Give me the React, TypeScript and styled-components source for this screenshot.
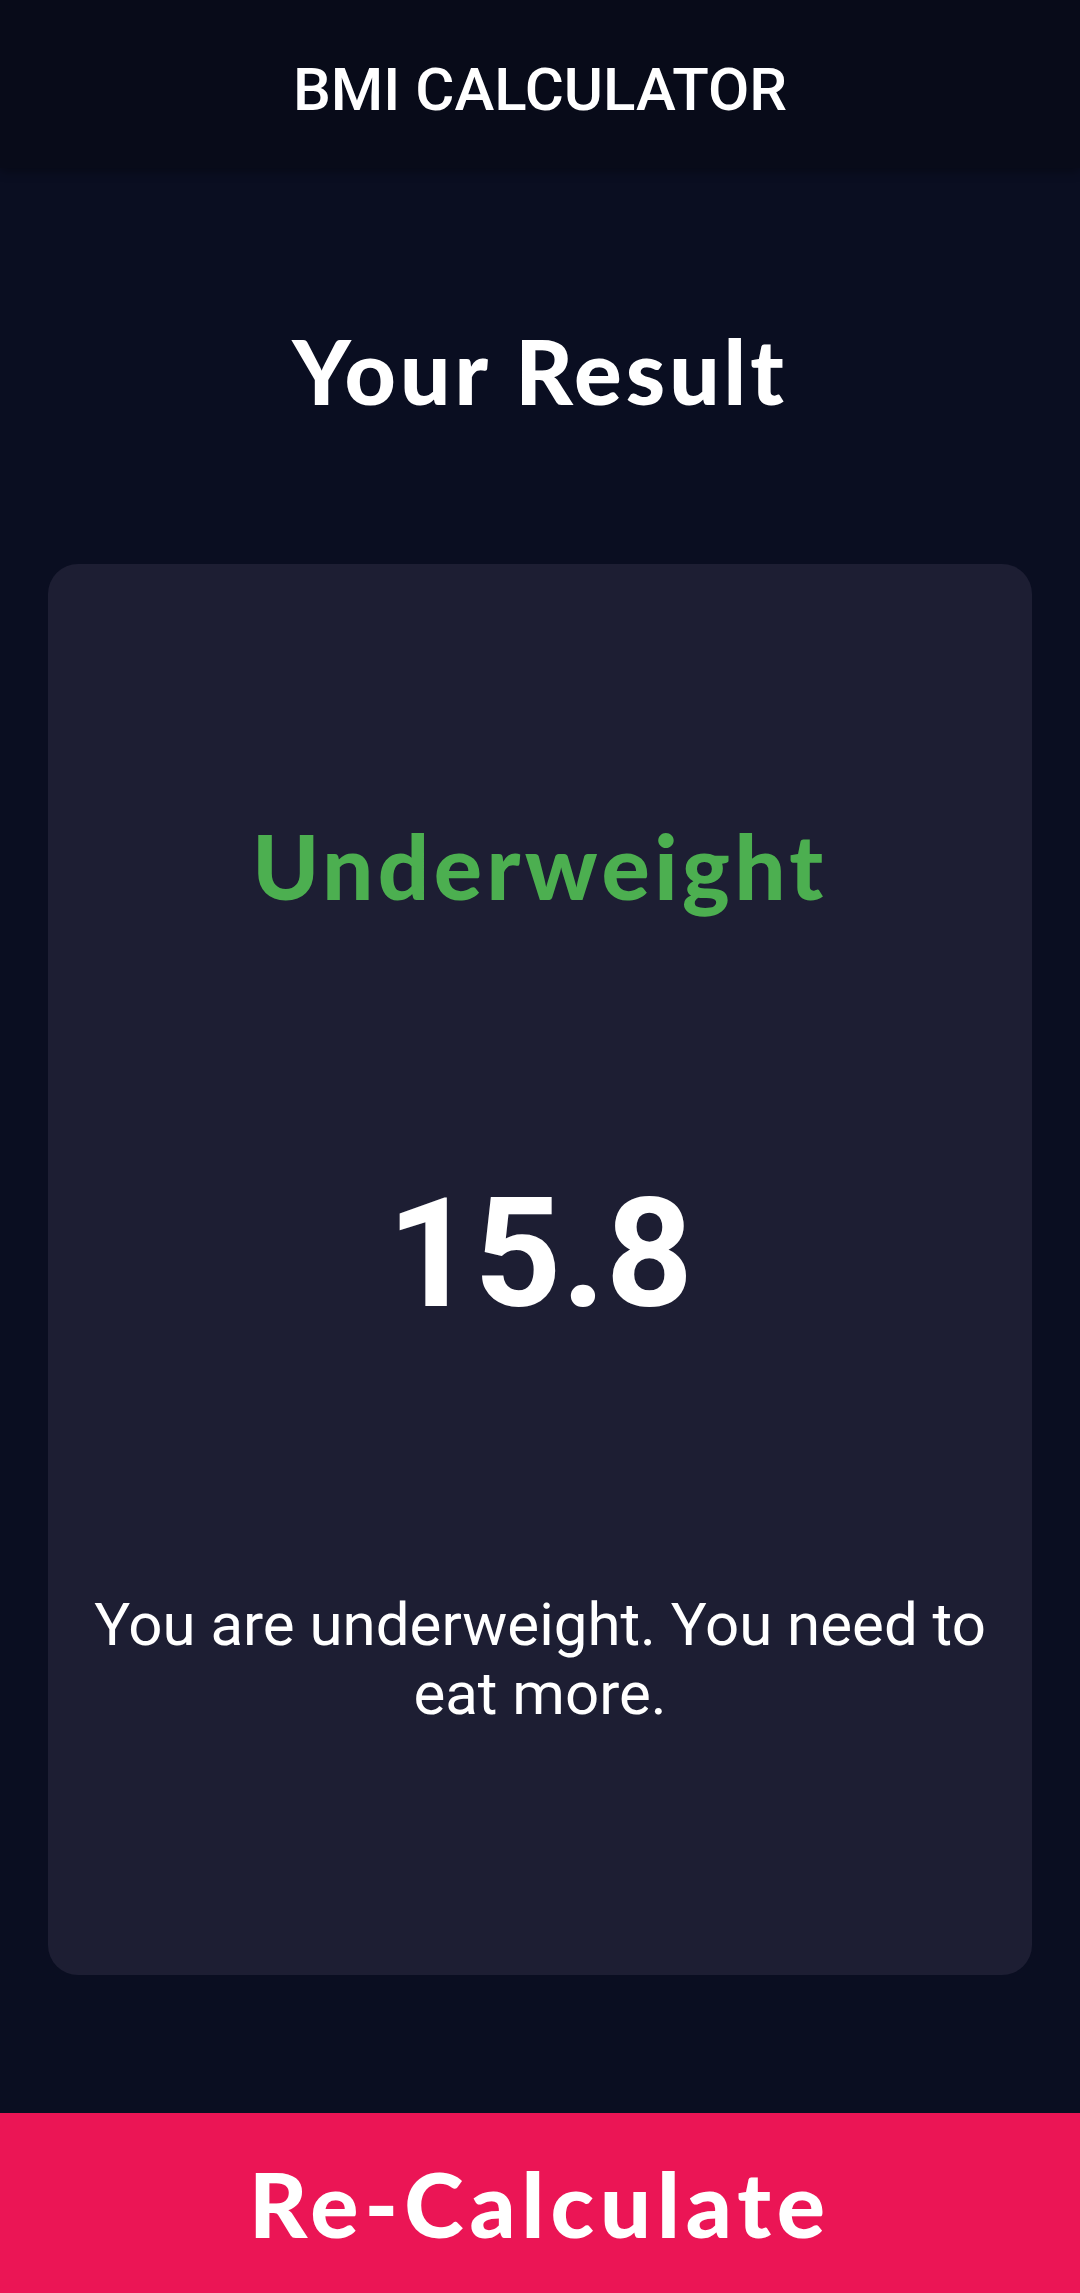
import styled, { createGlobalStyle } from 'styled-components';

const GlobalStyle = createGlobalStyle`
  html, body {
    margin: 0;
    padding: 0;
    background-color: #0A0E21;
  }
  * {
    box-sizing: border-box;
  }
`;

const Screen = styled.div`
  display: flex;
  flex-direction: column;
  height: 100vh;
  background-color: #0A0E21;
  color: white;
`;

const AppBar = styled.header`
  flex: 0 0 168px;
  display: flex;
  align-items: center;
  justify-content: center;
  background-color: #080B19;
  box-shadow: 0 3px 10px rgba(0, 0, 0, 0.35);
  position: relative;
  z-index: 1;
`;

const AppTitle = styled.h1`
  margin: 0;
  padding-top: 10px;
  font-family: Roboto, "Liberation Sans", sans-serif;
  font-size: 60px;
  font-weight: 500;
  color: #ffffff;
`;

const Content = styled.main`
  flex: 1;
  display: flex;
  flex-direction: column;
  padding: 0 48px;
`;

const Title = styled.h2`
  margin: 150px 0 139px;
  text-align: center;
  font-family: Lato, "Open Sans", sans-serif;
  font-size: 89px;
  line-height: 1.2;
  font-weight: 900;
  letter-spacing: 4px;
  color: #ffffff;
`;

const Card = styled.section`
  height: 1411px;
  display: flex;
  flex-direction: column;
  justify-content: space-evenly;
  align-items: center;
  padding: 0 16px;
  background-color: #1D1E33;
  border-radius: 30px;
`;

const Status = styled.div<{ $color: string }>`
  font-family: Lato, "Open Sans", sans-serif;
  font-size: 90px;
  line-height: 1.2;
  font-weight: 900;
  letter-spacing: 4.5px;
  color: ${(p) => p.$color};
`;

const Score = styled.div`
  font-family: Roboto, "Liberation Sans", sans-serif;
  font-size: 152px;
  line-height: 1.172;
  font-weight: 700;
  color: #ffffff;
`;

const Advice = styled.p`
  margin: 0;
  text-align: center;
  font-family: Roboto, "Liberation Sans", sans-serif;
  font-size: 60px;
  line-height: 69px;
  font-weight: 400;
  color: #ffffff;
`;

const BottomButton = styled.button`
  flex: 0 0 180px;
  width: 100%;
  border: none;
  margin: 0;
  padding: 0;
  display: flex;
  align-items: center;
  justify-content: center;
  background-color: #EB1555;
  color: #ffffff;
  font-family: Lato, "Open Sans", sans-serif;
  font-size: 90px;
  font-weight: 900;
  letter-spacing: 6px;
  cursor: pointer;
`;

const result = {
  label: 'Underweight',
  color: '#4CAF50',
  bmi: 15.8,
  advice: 'You are underweight. You need to eat more.',
};

const App: React.FC = () => {
  return (
    <>
      <GlobalStyle />
      <Screen>
        <AppBar>
          <AppTitle>BMI CALCULATOR</AppTitle>
        </AppBar>
        <Content>
          <Title>Your Result</Title>
          <Card>
            <Status $color={result.color}>{result.label}</Status>
            <Score>{result.bmi.toFixed(1)}</Score>
            <Advice>{result.advice}</Advice>
          </Card>
        </Content>
        <BottomButton type="button">Re-Calculate</BottomButton>
      </Screen>
    </>
  );
};

export default App;
